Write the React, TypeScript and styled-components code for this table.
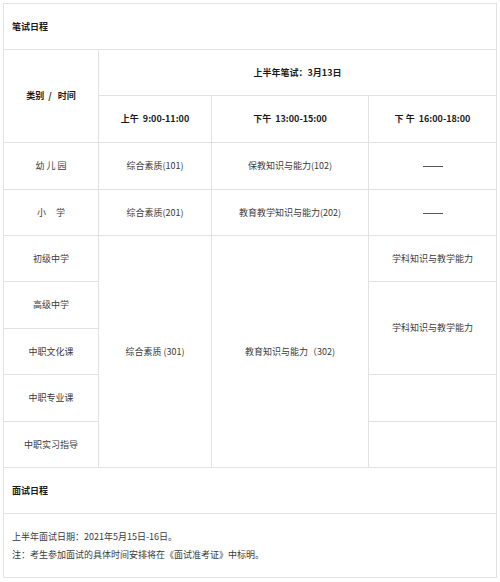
import React from "react";
import styled, { createGlobalStyle } from "styled-components";

const GlobalStyle = createGlobalStyle`
  html, body {
    margin: 0;
    padding: 0;
    background: #fff;
  }
  body {
    font-family: "Noto Sans CJK SC", "Noto Sans", sans-serif;
    color: #333;
  }
`;

const Page = styled.div`
  width: 500px;
  padding: 3px 4px 0 3px;
  box-sizing: border-box;
`;

const Table = styled.table`
  width: 493px;
  border-collapse: collapse;
  table-layout: fixed;
  font-size: 9px;
`;

const Row = styled.tr<{ $h: number }>`
  height: ${(p) => p.$h}px;
`;

const Cell = styled.td<{ $bold?: boolean; $left?: boolean }>`
  border: 1px solid #e2e2e2;
  padding: 0 8px;
  text-align: ${(p) => (p.$left ? "left" : "center")};
  vertical-align: middle;
  font-weight: ${(p) => (p.$bold ? 700 : 400)};
  color: ${(p) => (p.$bold ? "#1a1a1a" : "#3a3a3a")};
  white-space: pre;
  line-height: 14px;
`;

const Dash = styled.span`
  display: inline-block;
  width: 20px;
  height: 1px;
  background: #555;
  vertical-align: middle;
`;

const NoteLine = styled.div`
  line-height: 18px;
`;

const lowerRows = ["高级中学", "中职文化课", "中职专业课", "中职实习指导"];

export default function App() {
  return (
    <Page>
      <GlobalStyle />
      <Table>
        <colgroup>
          <col style={{ width: 95 }} />
          <col style={{ width: 113 }} />
          <col style={{ width: 157 }} />
          <col style={{ width: 128 }} />
        </colgroup>
        <tbody>
          <Row $h={46}>
            <Cell colSpan={4} $left $bold>
              笔试日程
            </Cell>
          </Row>
          <Row $h={46}>
            <Cell rowSpan={2} $bold>
              {"类别  /   时间"}
            </Cell>
            <Cell colSpan={3} $bold>
              上半年笔试：3月13日
            </Cell>
          </Row>
          <Row $h={47}>
            <Cell $bold>{"上午  9:00-11:00"}</Cell>
            <Cell $bold>{"下午  13:00-15:00"}</Cell>
            <Cell $bold>{"下 午  16:00-18:00"}</Cell>
          </Row>
          <Row $h={47}>
            <Cell>{"幼 儿 园"}</Cell>
            <Cell>综合素质(101)</Cell>
            <Cell>保教知识与能力(102)</Cell>
            <Cell>
              <Dash />
            </Cell>
          </Row>
          <Row $h={46}>
            <Cell>{"小     学"}</Cell>
            <Cell>综合素质(201)</Cell>
            <Cell>教育教学知识与能力(202)</Cell>
            <Cell>
              <Dash />
            </Cell>
          </Row>
          <Row $h={46}>
            <Cell>初级中学</Cell>
            <Cell rowSpan={5}>综合素质 (301)</Cell>
            <Cell rowSpan={5}>教育知识与能力（302)</Cell>
            <Cell>学科知识与教学能力</Cell>
          </Row>
          <Row $h={47}>
            <Cell>{lowerRows[0]}</Cell>
            <Cell rowSpan={2}>学科知识与教学能力</Cell>
          </Row>
          <Row $h={46}>
            <Cell>{lowerRows[1]}</Cell>
          </Row>
          <Row $h={47}>
            <Cell>{lowerRows[2]}</Cell>
            <Cell />
          </Row>
          <Row $h={46}>
            <Cell>{lowerRows[3]}</Cell>
            <Cell />
          </Row>
          <Row $h={46}>
            <Cell colSpan={4} $left $bold>
              面试日程
            </Cell>
          </Row>
          <Row $h={64}>
            <Cell colSpan={4} $left>
              <NoteLine>上半年面试日期：2021年5月15日-16日。</NoteLine>
              <NoteLine>注：考生参加面试的具体时间安排将在《面试准考证》中标明。</NoteLine>
            </Cell>
          </Row>
        </tbody>
      </Table>
    </Page>
  );
}
